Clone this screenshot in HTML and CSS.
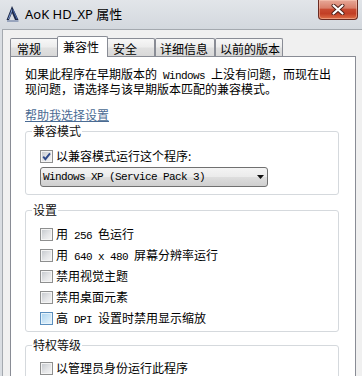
FILE: index.html
```html
<!DOCTYPE html>
<html lang="zh-CN">
<head>
<meta charset="utf-8">
<title>AoK HD_XP 属性</title>
<link rel="stylesheet" href="styles.css">
</head>
<body>
<div class="window">
  <div class="titlebar">
    <svg class="app-icon" viewBox="0 0 15 17" width="15" height="17">
      <path d="M7 1 L1.5 15 L4 15 L7 8 L10 15 L13.5 15 Z" fill="#1c2848"/>
      <path d="M7 3.5 L3 14 L4 14 L7 6.5 Z" fill="#7d9bd1"/>
      <path d="M7.6 5 L11.5 14 L12.6 14 L8 3.8 Z" fill="#4c6aa8"/>
      <path d="M2 16 L13.5 16" stroke="#5b6f99" stroke-width="1"/>
    </svg>
    <span class="title">AoK HD_XP 属性</span>
    <div class="close">
      <svg viewBox="0 0 14 11" width="14" height="11">
        <path d="M2.5 1.5 L11.5 9.5 M11.5 1.5 L2.5 9.5" stroke="#4a1d16" stroke-width="4" stroke-linecap="round"/>
        <path d="M2.5 1.5 L11.5 9.5 M11.5 1.5 L2.5 9.5" stroke="#ffffff" stroke-width="2.2" stroke-linecap="round"/>
      </svg>
    </div>
  </div>
  <div class="client">
    <div class="tabs">
      <div class="tab t1">常规</div>
      <div class="tab t2 active">兼容性</div>
      <div class="tab t3">安全</div>
      <div class="tab t4">详细信息</div>
      <div class="tab t5">以前的版本</div>
    </div>
    <div class="panel">
      <p class="intro">如果此程序在早期版本的<span class="en"> Windows </span>上没有问题，而现在出现问题，请选择与该早期版本匹配的兼容模式。</p>
      <a class="help" href="#">帮助我选择设置</a>

      <fieldset class="group g1">
        <legend>兼容模式</legend>
        <div class="inner">
          <div class="row">
            <span class="cb checked"><svg viewBox="0 0 11 11" width="11" height="11"><path d="M2.2 5.6 L4.4 8.2 L9 2.4" fill="none" stroke="#2f4a8a" stroke-width="1.9"/></svg></span>
            <span class="label">以兼容模式运行这个程序:</span>
          </div>
          <div class="combo">
            <span class="en">Windows XP (Service Pack 3)</span>
            <svg class="arrow" viewBox="0 0 7 5" width="7" height="5"><path d="M0 0 L7 0 L3.5 4 Z" fill="#111"/></svg>
          </div>
        </div>
      </fieldset>

      <fieldset class="group g2">
        <legend>设置</legend>
        <div class="inner">
          <div class="row"><span class="cb"></span><span class="label">用<span class="en"> 256 </span>色运行</span></div>
          <div class="row"><span class="cb"></span><span class="label">用<span class="en"> 640 x 480 </span>屏幕分辨率运行</span></div>
          <div class="row"><span class="cb"></span><span class="label">禁用视觉主题</span></div>
          <div class="row"><span class="cb"></span><span class="label">禁用桌面元素</span></div>
          <div class="row"><span class="cb hover"></span><span class="label">高<span class="en"> DPI </span>设置时禁用显示缩放</span></div>
        </div>
      </fieldset>

      <fieldset class="group g3">
        <legend>特权等级</legend>
        <div class="inner">
          <div class="row"><span class="cb"></span><span class="label">以管理员身份运行此程序</span></div>
        </div>
      </fieldset>
    </div>
  </div>
</div>
</body>
</html>
```
FILE: styles.css
```css
* { box-sizing: border-box; }
html, body { margin: 0; padding: 0; }
body {
  width: 362px;
  height: 376px;
  overflow: hidden;
  background: #d9dde2;
  font-family: "Noto Sans CJK SC", "Noto Sans", sans-serif;
  font-size: 12px;
  color: #000;
}
.window {
  width: 362px;
  height: 376px;
  display: flex;
  flex-direction: column;
}
.titlebar {
  height: 29px;
  flex: none;
  display: flex;
  align-items: flex-start;
  background: linear-gradient(#e2e5e9, #d3d8de);
}
.app-icon { flex: none; margin: 5px 0 0 5px; }
.title {
  font-family: "Noto Sans", "Noto Sans CJK SC", sans-serif;
  font-size: 13px;
  line-height: 18px;
  margin: 5px 0 0 5px;
  color: #000;
}
.close {
  margin-left: auto;
  margin-right: 4px;
  width: 40px;
  height: 20px;
  border: 1px solid #6a2b22;
  border-top: none;
  border-radius: 0 0 4px 4px;
  background: linear-gradient(#e7a898, #d97f6a 42%, #c84a31 50%, #c23f26 72%, #de7048);
  box-shadow: inset 0 0 0 1px rgba(255, 210, 190, 0.45);
  display: flex;
  align-items: center;
  justify-content: center;
}
.client {
  flex: 1;
  margin-left: 2px;
  background: #f0f0f0;
  border-left: 1px solid #a4a9af;
  border-top: 1px solid #a4a9af;
  padding: 6px 0 0 7px;
}
.tabs {
  display: flex;
  align-items: flex-end;
  height: 21px;
}
.tab {
  height: 18px;
  margin-bottom: 1px;
  border: 1px solid #898c95;
  border-bottom: none;
  border-radius: 2px 2px 0 0;
  background: linear-gradient(#f7f7f7, #ededed 45%, #e0e0e0 55%, #d8d8d8);
  padding: 2px 0 0 6px;
  line-height: 15px;
  white-space: nowrap;
}
.t1 { width: 49px; }
.t2 { width: 51px; }
.t3 { width: 49px; }
.t4 { width: 60px; padding-left: 4px; }
.t5 { width: 68px; padding-left: 4px; }
.tab.active {
  height: 21px;
  margin: 0 -2px;
  padding-left: 5px;
  background: #fff;
  position: relative;
  z-index: 1;
}
.panel {
  margin-top: -1px;
  width: 346px;
  height: 330px;
  background: #fff;
  border: 1px solid #898c95;
  padding: 10px 16px 0 14px;
}
.en {
  font-family: "Liberation Mono", monospace;
  font-size: 11px;
  letter-spacing: -0.6px;
  line-height: 1;
  white-space: pre;
}
.intro {
  margin: 0;
  line-height: 14px;
}
.help {
  display: block;
  width: max-content;
  margin-top: 12px;
  line-height: 14px;
  color: #4a6b93;
  text-decoration: underline;
}
.group {
  margin: 2px 0 0;
  min-width: 0;
  border: 1px solid #d5d9dd;
  border-radius: 3px;
  padding: 10px 0 7px 6px;
}
.group legend {
  padding: 0 1px;
  line-height: 14px;
  color: #111;
}
.g2 { margin-top: 8px; padding-top: 9px; padding-bottom: 5px; }
.g3 { margin-top: 6px; padding-top: 8px; padding-bottom: 20px; }
.inner { padding-left: 8px; }
.row {
  display: flex;
  align-items: center;
  gap: 3px;
  height: 16px;
}
.g2 .row + .row { margin-top: 5px; }
.label { line-height: 16px; white-space: nowrap; }
.cb {
  flex: none;
  width: 13px;
  height: 13px;
  border: 1px solid #8e8f8f;
  background: linear-gradient(135deg, #c2c6cb 0%, #e4e5e7 55%, #f6f6f6 100%);
  box-shadow: inset 0 0 0 1px #f4f4f4;
  display: flex;
  align-items: center;
  justify-content: center;
}
.cb.hover {
  border-color: #5b8fbf;
  background: linear-gradient(135deg, #a9d2ef 0%, #cde6f7 55%, #eaf5fc 100%);
  box-shadow: inset 0 0 0 1px #e6f3fb;
}
.combo {
  margin-top: 3px;
  width: 228px;
  height: 20px;
  border: 1px solid #707070;
  border-radius: 3px;
  background: linear-gradient(#f4f4f4, #ebebeb 48%, #dddddd 52%, #cfcfcf);
  display: flex;
  align-items: center;
  justify-content: space-between;
  padding: 0 3px 0 2px;
}
.combo .en { line-height: 18px; }
.arrow { flex: none; }
```
